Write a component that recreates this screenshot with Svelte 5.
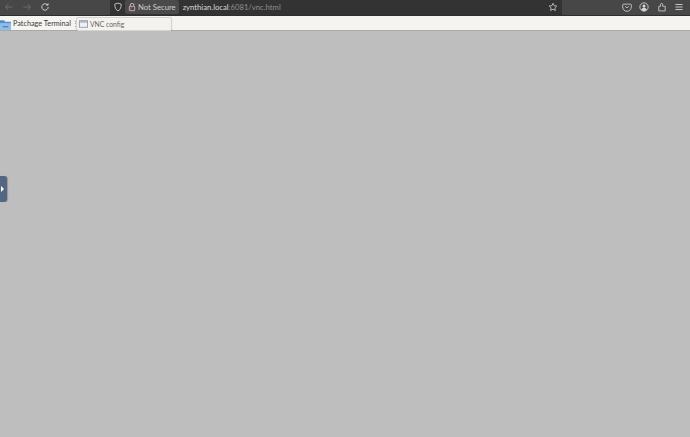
<script lang="ts">
  const url = { host: 'zynthian.local', rest: ':6081/vnc.html' };
</script>

<div class="page">
  <header class="browser">
    <div class="nav">
      <svg class="ic" viewBox="0 0 14 14"><path d="M12 7H2M6 3 2 7l4 4" fill="none" stroke="#6f6f6f" stroke-width="1.3"/></svg>
      <svg class="ic" viewBox="0 0 14 14"><path d="M2 7h10M8 3l4 4-4 4" fill="none" stroke="#6f6f6f" stroke-width="1.3"/></svg>
      <svg class="ic" viewBox="0 0 14 14"><path d="M11.5 7A4.5 4.5 0 1 1 10 3.6" fill="none" stroke="#d8d8d8" stroke-width="1.3"/><path d="M11.8 1.4v3.6H8.2z" fill="#d8d8d8"/></svg>
    </div>
    <div class="urlbar">
      <svg class="shield" viewBox="0 0 14 14"><path d="M7 1.5 2.5 3c0 5 1.3 7.700 4.500 9.500C10.200 10.700 11.500 8 11.500 3z" fill="none" stroke="#d4d4d4" stroke-width="1.200"/></svg>
      <div class="secure">
        <svg class="lock" viewBox="0 0 12 14"><path d="M3.500 6V4a2.500 2.500 0 0 1 5 0v2" fill="none" stroke="#d8d8d8" stroke-width="1.100"/><rect x="2" y="6" width="8" height="6.500" rx="1" fill="none" stroke="#d8d8d8" stroke-width="1.100"/><path d="M1 13 11 2" stroke="#e2566b" stroke-width="1.300"/></svg>
        <span>Not Secure</span>
      </div>
      <span class="addr">{url.host}<span class="dim">{url.rest}</span></span>
      <svg class="star" viewBox="0 0 14 14"><path d="m7 1.800 1.600 3.400 3.700.5-2.700 2.500.7 3.700L7 10.100l-3.300 1.800.7-3.700-2.700-2.500 3.700-.5z" fill="none" stroke="#d4d4d4" stroke-width="1.100"/></svg>
    </div>
    <div class="tools">
      <svg class="ic" viewBox="0 0 14 14"><path d="M2 3h10a1 1 0 0 1 1 1v3a6 6 0 0 1-12 0V4a1 1 0 0 1 1-1z" fill="none" stroke="#d0d0d0" stroke-width="1.200"/><path d="m4.500 6 2.500 2.300L9.500 6" fill="none" stroke="#d0d0d0" stroke-width="1.200"/></svg>
      <svg class="ic" viewBox="0 0 14 14"><circle cx="7" cy="7" r="5.800" fill="none" stroke="#d8d8d8" stroke-width="1.200"/><circle cx="7" cy="5.600" r="2.100" fill="#d8d8d8"/><path d="M3.200 11c.8-2 2.200-2.800 3.800-2.800s3 .8 3.800 2.800A5.500 5.500 0 0 1 3.200 11z" fill="#d8d8d8"/></svg>
      <svg class="ic" viewBox="0 0 14 14"><path d="M2.500 6H5V3.500a1.500 1.500 0 0 1 3 0V6h3.500v6.500h-9z" fill="none" stroke="#d0d0d0" stroke-width="1.200"/></svg>
      <svg class="ic" viewBox="0 0 14 14"><path d="M2 3.500h10M2 7h10M2 10.500h10" stroke="#c4c4c4" stroke-width="1.400"/></svg>
    </div>
  </header>

  <div class="panel">
    <div class="launcher">
      <svg class="folder" viewBox="0 0 12 12"><path d="M0 2h4.500l1 1.500H12V12H0z" fill="#4f8fd0"/><path d="M0 5h12v7H0z" fill="#8dbde8"/><path d="M3 9h6" stroke="#2f6fb0" stroke-width="1"/></svg>
      <span class="task">Patchage Terminal</span>
      <span class="grip">⋮</span>
    </div>
    <div class="tooltip">
      <svg class="win" viewBox="0 0 11 9"><rect x=".5" y=".5" width="10" height="8" fill="#f0f0f2" stroke="#8a93a8"/><path d="M1 2h9" stroke="#8ea2c8" stroke-width="1.400"/></svg>
      <span>VNC config</span>
    </div>
  </div>

  <main class="desktop">
    <div class="handle">
      <span class="arrow"></span>
    </div>
  </main>
</div>

<style>
  :global(body) {
    margin: 0;
    background: #bebebe;
  }
  .page {
    width: 690px;
    height: 437px;
    display: flex;
    flex-direction: column;
    overflow: hidden;
    font-family: Lato, 'Noto Sans', sans-serif;
  }
  .browser {
    height: 15px;
    flex: none;
    background: #474747;
    border-bottom: 1px solid #2e2e2e;
    display: flex;
    align-items: center;
  }
  .ic { width: 10px; height: 10px; flex: none; }
  .nav {
    width: 110px;
    padding: 0 0 1px 4px;
    box-sizing: border-box;
    display: flex;
    gap: 8px;
  }
  .urlbar {
    width: 452px;
    height: 15px;
    flex: none;
    box-sizing: border-box;
    padding-bottom: 1px;
    background: #333;
    display: flex;
    align-items: center;
    font-size: 7.700px;
    color: #cfcfcf;
  }
  .shield { width: 10px; height: 10px; margin-left: 3px; flex: none; }
  .secure {
    display: flex;
    align-items: center;
    gap: 2px;
    height: 14px;
    margin-left: 2px;
    padding: 0 3px;
    background: #4a4a4a;
    border-radius: 2px;
  }
  .lock { width: 8px; height: 10px; }
  .addr { margin-left: 4px; color: #dcdcdc; }
  .dim { color: #8f8f8f; }
  .star { width: 10px; height: 10px; margin-left: auto; margin-right: 4px; }
  .tools {
    flex: 1;
    display: flex;
    justify-content: flex-end;
    gap: 7.500px;
    padding: 0 6px 1px 0;
  }
  .panel {
    height: 14px;
    flex: none;
    position: relative;
    background: #f5f4f1;
    border-bottom: 1px solid #a9a9a9;
    display: flex;
    align-items: center;
  }
  .launcher {
    display: flex;
    align-items: center;
    font-size: 7.300px;
    color: #3a3a3a;
  }
  .folder { width: 11px; height: 12px; flex: none; margin-top: 2px; }
  .task { margin-left: 2px; white-space: nowrap; }
  .grip { margin-left: 1px; color: #777; }
  .tooltip {
    position: absolute;
    left: 76px;
    top: 1px;
    width: 96px;
    height: 14px;
    box-sizing: border-box;
    background: #f3f2ef;
    border: 1px solid #d6d4cf;
    border-radius: 2px;
    box-shadow: 0 1px 1px #0003;
    display: flex;
    align-items: center;
    padding-left: 2px;
    font-size: 6.800px;
    color: #666;
  }
  .win { width: 9px; height: 8px; margin-right: 2px; }
  .desktop {
    flex: 1;
    position: relative;
    background: #bebebe;
  }
  .handle {
    position: absolute;
    left: 0;
    top: 145px;
    width: 7px;
    height: 26px;
    background: #516783;
    border-radius: 0 3px 3px 0;
    box-shadow: 1px 0 1px #0003;
  }
  .arrow {
    position: absolute;
    left: 1px;
    top: 10px;
    width: 0;
    height: 0;
    border-left: 3px solid #fff;
    border-top: 3px solid transparent;
    border-bottom: 3px solid transparent;
  }
</style>
